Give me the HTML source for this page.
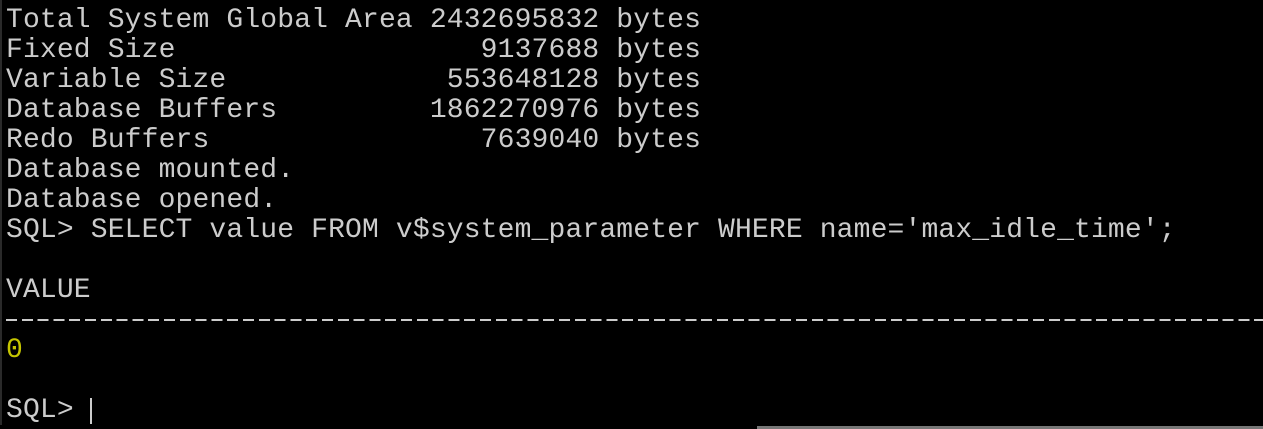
<!DOCTYPE html>
<html><head><style>
html,body{margin:0;padding:0;background:#000;width:1263px;height:429px;overflow:hidden;position:relative}
pre{position:absolute;left:6px;top:6px;margin:0;font-family:"Liberation Mono",monospace;font-size:28px;line-height:30px;color:#cccccc;letter-spacing:0.15px}
.y{color:#c5c500}
.dash{position:absolute;left:6px;top:319px;width:1257px;height:2px;background:repeating-linear-gradient(90deg,#cccccc 0 11px,transparent 11px 15.8px)}
.cur{position:absolute;left:90px;top:398px;width:2px;height:26px;background:#cccccc}
.bar{position:absolute;left:757px;top:426px;width:506px;height:3px;background:#777}
.edge{position:absolute;left:0;top:0;width:2px;height:425px;background:#2a2a2a}
</style></head><body>
<div class="edge"></div>
<pre>Total System Global Area 2432695832 bytes
Fixed Size                  9137688 bytes
Variable Size             553648128 bytes
Database Buffers         1862270976 bytes
Redo Buffers                7639040 bytes
Database mounted.
Database opened.
SQL&gt; SELECT value FROM v$system_parameter WHERE name='max_idle_time';

VALUE

<span class="y">0</span>

SQL&gt; </pre>
<div class="dash"></div>
<div class="cur"></div>
<div class="bar"></div>
</body></html>
